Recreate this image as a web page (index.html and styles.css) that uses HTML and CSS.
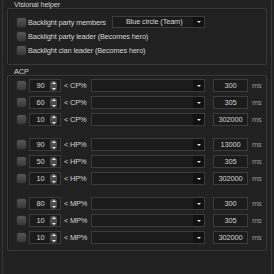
FILE: index.html
```html
<!DOCTYPE html>
<html lang="en">
<head>
  <meta charset="UTF-8">
  <title>Visional helper / ACP</title>
  <link rel="stylesheet" href="styles.css">
</head>
<body>
  <div class="frame">
    <div class="group-title">Visional helper</div>
    <div class="group helper">
      <div class="check-row">
        <span class="checkbox"></span>
        <span class="label wide">Backlight party members</span>
        <div class="select team">
          <span class="select-text">Blue circle (Team)</span>
          <span class="select-arrow"></span>
        </div>
      </div>
      <div class="check-row">
        <span class="checkbox"></span>
        <span class="label">Backlight party leader (Becomes hero)</span>
      </div>
      <div class="check-row">
        <span class="checkbox"></span>
        <span class="label">Backlight clan leader (Becomes hero)</span>
      </div>
    </div>

    <div class="group-title acp-title">ACP</div>
    <div class="group acp">
      <div class="acp-set">
        <div class="acp-row">
          <span class="checkbox"></span>
          <div class="spin"><span class="spin-value">90</span><span class="spin-btn"></span></div>
          <span class="stat">&lt; CP%</span>
          <div class="select item"><span class="select-text"></span><span class="select-arrow"></span></div>
          <div class="field">300</div>
          <span class="unit">ms</span>
        </div>
        <div class="acp-row">
          <span class="checkbox"></span>
          <div class="spin"><span class="spin-value">60</span><span class="spin-btn"></span></div>
          <span class="stat">&lt; CP%</span>
          <div class="select item"><span class="select-text"></span><span class="select-arrow"></span></div>
          <div class="field">305</div>
          <span class="unit">ms</span>
        </div>
        <div class="acp-row">
          <span class="checkbox"></span>
          <div class="spin"><span class="spin-value">10</span><span class="spin-btn"></span></div>
          <span class="stat">&lt; CP%</span>
          <div class="select item"><span class="select-text"></span><span class="select-arrow"></span></div>
          <div class="field">302000</div>
          <span class="unit">ms</span>
        </div>
      </div>

      <div class="acp-set">
        <div class="acp-row">
          <span class="checkbox"></span>
          <div class="spin"><span class="spin-value">90</span><span class="spin-btn"></span></div>
          <span class="stat">&lt; HP%</span>
          <div class="select item"><span class="select-text"></span><span class="select-arrow"></span></div>
          <div class="field">13000</div>
          <span class="unit">ms</span>
        </div>
        <div class="acp-row">
          <span class="checkbox"></span>
          <div class="spin"><span class="spin-value">50</span><span class="spin-btn"></span></div>
          <span class="stat">&lt; HP%</span>
          <div class="select item"><span class="select-text"></span><span class="select-arrow"></span></div>
          <div class="field">305</div>
          <span class="unit">ms</span>
        </div>
        <div class="acp-row">
          <span class="checkbox"></span>
          <div class="spin"><span class="spin-value">10</span><span class="spin-btn"></span></div>
          <span class="stat">&lt; HP%</span>
          <div class="select item"><span class="select-text"></span><span class="select-arrow"></span></div>
          <div class="field">302000</div>
          <span class="unit">ms</span>
        </div>
      </div>

      <div class="acp-set">
        <div class="acp-row">
          <span class="checkbox"></span>
          <div class="spin"><span class="spin-value">80</span><span class="spin-btn"></span></div>
          <span class="stat">&lt; MP%</span>
          <div class="select item"><span class="select-text"></span><span class="select-arrow"></span></div>
          <div class="field">300</div>
          <span class="unit">ms</span>
        </div>
        <div class="acp-row">
          <span class="checkbox"></span>
          <div class="spin"><span class="spin-value">10</span><span class="spin-btn"></span></div>
          <span class="stat">&lt; MP%</span>
          <div class="select item"><span class="select-text"></span><span class="select-arrow"></span></div>
          <div class="field">305</div>
          <span class="unit">ms</span>
        </div>
        <div class="acp-row">
          <span class="checkbox"></span>
          <div class="spin"><span class="spin-value">10</span><span class="spin-btn"></span></div>
          <span class="stat">&lt; MP%</span>
          <div class="select item"><span class="select-text"></span><span class="select-arrow"></span></div>
          <div class="field">302000</div>
          <span class="unit">ms</span>
        </div>
      </div>
    </div>
  </div>
</body>
</html>
```

FILE: styles.css
```css
html, body {
  margin: 0;
  padding: 0;
  background-color: #212121;
}

body {
  font-family: "Liberation Sans", Arial, sans-serif;
  font-size: 7.4px;
  letter-spacing: -0.15px;
  color: #d4d4d4;
  width: 274px;
  height: 274px;
  overflow: hidden;
}

.frame {
  margin: 0 2px;
  height: 274px;
  border-left: 1px solid #363636;
  border-right: 1px solid #363636;
  padding: 0 4px;
}

.group-title {
  height: 8px;
  line-height: 9px;
  padding-left: 7px;
  color: #d0d0d0;
}

.acp-title {
  margin-top: 2px;
}

.group {
  border: 1px solid #393939;
  border-radius: 2px;
  box-shadow: inset 1px 1px 0 #1a1a1a;
}

.helper {
  padding: 6px 0 7px 9px;
}

.check-row {
  display: flex;
  align-items: center;
  height: 14px;
}

.checkbox {
  flex: none;
  width: 9px;
  height: 9px;
  border-radius: 2px;
  background: linear-gradient(#575757, #383838);
  box-shadow: 0 0 0 1px #262626;
}

.label {
  margin-left: 2px;
  white-space: nowrap;
}

.label.wide {
  width: 84px;
}

.select {
  display: flex;
  height: 12px;
  border: 1px solid #3c3c3c;
  background-color: #1b1b1b;
  box-sizing: border-box;
}

.select.team {
  width: 93px;
}

.select.item {
  width: 114px;
  height: 13px;
}

.select-text {
  flex: 1;
  padding-left: 13px;
  line-height: 10px;
  white-space: nowrap;
}

.select-arrow {
  width: 11px;
  background-color: #111111;
  display: flex;
  align-items: center;
  justify-content: center;
}

.select-arrow::after {
  content: "";
  border-left: 2px solid transparent;
  border-right: 2px solid transparent;
  border-top: 2px solid #e6e6e6;
}

.acp {
  padding: 3px 0 5px 9px;
  height: 176px;
  box-sizing: border-box;
}

.acp-set {
  display: flex;
  flex-direction: column;
  gap: 4px;
  margin-bottom: 12px;
}

.acp-row {
  display: flex;
  align-items: center;
  height: 13px;
}

.spin {
  display: flex;
  align-items: center;
  width: 32px;
  height: 13px;
  margin-left: 3px;
  border: 1px solid #3c3c3c;
  background-color: #1b1b1b;
  box-sizing: border-box;
}

.spin-value {
  flex: 1;
  text-align: center;
  padding-left: 1px;
}

.spin-btn {
  position: relative;
  width: 7px;
  height: 10px;
  margin-right: 3px;
  border-radius: 3px;
  background: linear-gradient(#5a5a5a, #404040);
}

.spin-btn::before,
.spin-btn::after {
  content: "";
  position: absolute;
  left: 1.5px;
  border-left: 2px solid transparent;
  border-right: 2px solid transparent;
}

.spin-btn::before {
  top: 1px;
  border-bottom: 2px solid #f0f0f0;
}

.spin-btn::after {
  bottom: 1px;
  border-top: 2px solid #f0f0f0;
}

.stat {
  width: 27px;
  margin-left: 3px;
  white-space: nowrap;
}

.field {
  width: 35px;
  height: 13px;
  margin-left: 8px;
  border: 1px solid #3c3c3c;
  background-color: #1b1b1b;
  box-sizing: border-box;
  text-align: center;
  line-height: 11px;
}

.unit {
  margin-left: 4px;
  color: #9a9a9a;
}
```
